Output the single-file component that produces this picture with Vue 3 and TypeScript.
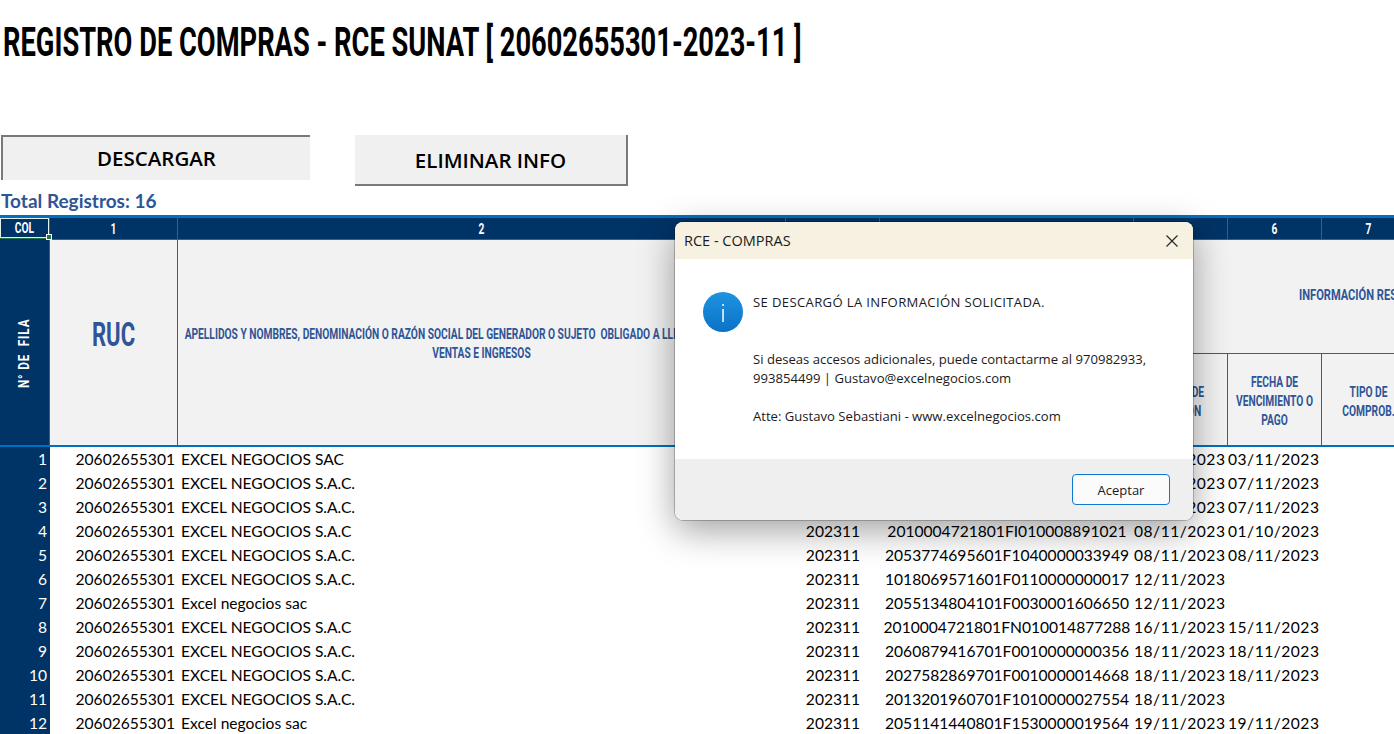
<script setup lang="ts">
const rows: [string, string, string, string, string, string][] = [
  ['20602655301', 'EXCEL NEGOCIOS SAC', '202311', '2010004721801F0010008880157', '02/11/2023', '03/11/2023'],
  ['20602655301', 'EXCEL NEGOCIOS S.A.C.', '202311', '2053774695601F1040000033801', '07/11/2023', '07/11/2023'],
  ['20602655301', 'EXCEL NEGOCIOS S.A.C.', '202311', '2053774695601F1040000033802', '07/11/2023', '07/11/2023'],
  ['20602655301', 'EXCEL NEGOCIOS S.A.C', '202311', '2010004721801FI010008891021', '08/11/2023', '01/10/2023'],
  ['20602655301', 'EXCEL NEGOCIOS S.A.C.', '202311', '2053774695601F1040000033949', '08/11/2023', '08/11/2023'],
  ['20602655301', 'EXCEL NEGOCIOS S.A.C.', '202311', '1018069571601F0110000000017', '12/11/2023', ''],
  ['20602655301', 'Excel negocios sac', '202311', '2055134804101F0030001606650', '12/11/2023', ''],
  ['20602655301', 'EXCEL NEGOCIOS S.A.C', '202311', '2010004721801FN010014877288', '16/11/2023', '15/11/2023'],
  ['20602655301', 'EXCEL NEGOCIOS S.A.C.', '202311', '2060879416701F0010000000356', '18/11/2023', '18/11/2023'],
  ['20602655301', 'EXCEL NEGOCIOS S.A.C.', '202311', '2027582869701F0010000014668', '18/11/2023', '18/11/2023'],
  ['20602655301', 'EXCEL NEGOCIOS S.A.C.', '202311', '2013201960701F1010000027554', '18/11/2023', ''],
  ['20602655301', 'Excel negocios sac', '202311', '2051141440801F1530000019564', '19/11/2023', '19/11/2023'],
]
</script>

<template>
  <div class="page">
    <h1 class="title"><span>REGISTRO DE COMPRAS - RCE SUNAT [ 20602655301-2023-11 ]</span></h1>
    <div class="actions">
      <button class="btn btn-down">DESCARGAR</button>
      <button class="btn btn-del">ELIMINAR INFO</button>
    </div>
    <div class="total">Total Registros: 16</div>
    <div class="sheet">
      <table>
        <colgroup>
          <col class="c0" /><col class="c1" /><col class="c2" /><col class="c3" /><col class="c4" />
          <col class="c5" /><col class="c5" /><col class="c5" /><col class="c5" />
        </colgroup>
        <thead>
          <tr class="nums">
            <th class="col-sel"><span class="cx">COL</span><span class="handle"></span></th>
            <th v-for="n in 8" :key="n"><span class="cx">{{ n }}</span></th>
          </tr>
          <tr class="h1">
            <th rowspan="2" class="side"><span>N° DE&nbsp; FILA</span></th>
            <th rowspan="2" class="ruc"><span class="cx">RUC</span></th>
            <th rowspan="2" class="name"><span class="cx">APELLIDOS Y NOMBRES, DENOMINACIÓN O RAZÓN SOCIAL DEL GENERADOR O SUJETO&nbsp; OBLIGADO A LLEVAR EL REGISTRO DE<br />VENTAS E INGRESOS</span></th>
            <th rowspan="2" class="sub"><span class="cx">PERIODO</span></th>
            <th rowspan="2" class="sub"><span class="cx">CAR SUNAT</span></th>
            <th colspan="4" class="group"><span class="gx">INFORMACIÓN RESPECTO AL COMPROBANTE</span></th>
          </tr>
          <tr class="h2">
            <th class="sub"><span class="cx">FECHA DE<br />EMISIÓN</span></th>
            <th class="sub"><span class="cx">FECHA DE<br />VENCIMIENTO O<br />PAGO</span></th>
            <th class="sub"><span class="cx">TIPO DE<br />COMPROB.</span></th>
            <th class="sub"><span class="cx">SERIE</span></th>
          </tr>
        </thead>
        <tbody>
          <tr v-for="(r, i) in rows" :key="i">
            <td class="idx">{{ i + 1 }}</td>
            <td class="r">{{ r[0] }}</td>
            <td class="l">{{ r[1] }}</td>
            <td class="m">{{ r[2] }}</td>
            <td class="m">{{ r[3] }}</td>
            <td class="m d1">{{ r[4] }}</td>
            <td class="m d2">{{ r[5] }}</td>
            <td></td><td></td>
          </tr>
        </tbody>
      </table>
    </div>

    <div class="dialog">
      <div class="dlg-head">
        <span>RCE - COMPRAS</span>
        <svg class="close" width="12" height="12" viewBox="0 0 12 12"><path d="M.5.5l11 11M11.500.5l-11 11" stroke="#222" stroke-width="1.100" fill="none" /></svg>
      </div>
      <div class="dlg-body">
        <svg class="info" width="40" height="40" viewBox="0 0 40 40">
          <defs>
            <linearGradient id="ig" x1="0" y1="0" x2="0" y2="1">
              <stop offset="0" stop-color="#1f93e2" />
              <stop offset="1" stop-color="#0b72c6" />
            </linearGradient>
          </defs>
          <circle cx="20" cy="20" r="20" fill="url(#ig)" />
          <rect x="19.300" y="12" width="1.500" height="2" fill="#fff" />
          <rect x="19.300" y="17" width="1.500" height="13" fill="#fff" />
        </svg>
        <div class="msg">
          <p class="m1">SE DESCARGÓ LA INFORMACIÓN SOLICITADA.</p>
          <p class="m2">Si deseas accesos adicionales, puede contactarme al 970982933, 993854499 | Gustavo@excelnegocios.com</p>
          <p class="m3">Atte: Gustavo Sebastiani - www.excelnegocios.com</p>
        </div>
      </div>
      <div class="dlg-foot">
        <button class="ok">Aceptar</button>
      </div>
    </div>
  </div>
</template>

<style>
html, body { margin: 0; overflow: hidden; background: #fff; }
</style>

<style scoped>
.page {
  position: relative;
  width: 1394px;
  height: 734px;
  overflow: hidden;
  background: #fff;
  font-family: Lato, "Liberation Sans", sans-serif;
  color: #000;
}
.title {
  margin: 0;
  height: 135px;
  box-sizing: border-box;
  padding: 20px 0 0 3px;
  font-family: Roboto, "Liberation Sans", sans-serif;
  font-weight: 700;
  font-size: 40px;
  line-height: 46px;
  color: #000;
  white-space: nowrap;
}
.title span {
  display: inline-block;
  transform: scaleX(.682);
  transform-origin: left center;
}
.actions {
  display: flex;
  align-items: flex-start;
  gap: 45px;
  padding-left: 1px;
  height: 55px;
}
.btn {
  font-family: "Open Sans", sans-serif;
  font-weight: 600;
  font-size: 20.500px;
  color: #000;
  background: #f0f0f0;
  padding: 0;
  border: 0;
}
.btn-down {
  width: 309px;
  height: 45px;
  padding-bottom: 2px;
  border-top: 2px solid #7a7878;
  border-left: 2px solid #7a7878;
}
.btn-del {
  width: 273px;
  height: 51px;
  border-right: 2px solid #7a7878;
  border-bottom: 2px solid #7a7878;
}
.total {
  height: 25px;
  padding-left: 1px;
  font-weight: 700;
  font-size: 19px;
  line-height: 22px;
  color: #2f5597;
}
.sheet {
  border-top: 3px solid #0070c0;
  width: 1394px;
  overflow: hidden;
}
table {
  border-collapse: separate;
  border-spacing: 0;
  table-layout: fixed;
  width: 1510px;
}
.c0 { width: 50px; }
.c1 { width: 128px; }
.c2 { width: 608px; }
.c3 { width: 94px; }
.c4 { width: 254px; }
.c5 { width: 94px; }
th {
  font-family: Roboto, "Liberation Sans", sans-serif;
  font-weight: 700;
  padding: 0;
  white-space: nowrap;
}
.cx {
  display: block;
  width: 300%;
  margin-left: -100%;
  transform: scaleX(.73);
}
.nums th {
  position: relative;
  background: #003366;
  color: #fff;
  height: 21px;
  font-size: 14px;
  border-right: 1px solid #0070c0;
}
.nums .col-sel { box-shadow: inset 0 0 0 1px #e8efe8; border-right: 1px solid #217346; border-bottom: 1px solid #217346; box-sizing: border-box; }
.handle {
  position: absolute;
  right: -3px;
  bottom: -2px;
  width: 4px;
  height: 4px;
  background: #217346;
  border: 1px solid #fff;
  z-index: 2;
}
.h1 th, .h2 th {
  background: #f2f2f2;
  color: #2f5597;
  border-right: 1px solid #0070c0;
  border-top: 1px solid #0070c0;
  font-size: 14px;
  line-height: 19px;
}
.h1 th { height: 113px; }
.h2 th { height: 87px; padding-top: 4px; }
.h1 .side {
  background: #003366;
  color: #fff;
  border-bottom: 2px solid #0070c0;
  border-top: 0;
  padding-top: 28px;
  letter-spacing: 1px;
}
.side span {
  display: inline-block;
  writing-mode: vertical-rl;
  transform: rotate(180deg) scaleY(.84);
}
.h1 .ruc { font-size: 33px; padding-bottom: 16px; border-bottom: 2px solid #0070c0; }
.h1 .ruc .cx { transform: scaleX(.67); }
.h1 .name, .h1 .sub { border-bottom: 2px solid #0070c0; }
.h1 .name { padding-top: 2px; }
.h1 .group {
  height: 67px;
  border-right: 0;
  text-align: left;
  vertical-align: top;
  padding: 46px 0 0 165px;
  font-size: 15px;
  overflow: hidden;
}
.gx { display: inline-block; transform: scaleX(.74); transform-origin: left center; }
.h2 th { border-bottom: 2px solid #0070c0; }
td {
  height: 24px;
  padding: 0;
  font-size: 15.600px;
  line-height: 24px;
  white-space: nowrap;
  overflow: hidden;
}
.idx { background: #003366; color: #fff; text-align: right; padding-right: 3px; }
.r { text-align: right; padding-right: 3px; }
.l { padding-left: 3px; }
.m { text-align: center; }
.d1, .d2 { letter-spacing: .5px; }
.d1 { padding-right: 8px; }
.d2 { padding-right: 7px; }
.dialog {
  position: absolute;
  left: 675px;
  top: 222px;
  width: 518px;
  height: 298px;
  display: flex;
  flex-direction: column;
  border-radius: 8px;
  overflow: hidden;
  background: #fff;
  box-shadow: 0 0 0 1px rgba(0, 0, 0, .22), 0 10px 36px rgba(0, 0, 0, .38);
  font-family: "Open Sans", sans-serif;
  font-size: 13.100px;
  color: #1a1a1a;
}
.dlg-head {
  height: 37px;
  flex: none;
  display: flex;
  align-items: center;
  justify-content: space-between;
  padding: 0 15px 0 9px;
  background: #f7f1e1;
  font-size: 14.500px;
}
.dlg-body {
  flex: 1;
  display: flex;
  gap: 10px;
  padding: 33px 0 0 28px;
}
.info { flex: none; }
.msg { width: 410px; }
.msg p { margin: 0; line-height: 19px; }
.m1 { padding-top: 1px; letter-spacing: .35px; }
.m2 { margin-top: 38px !important; }
.m3 { margin-top: 19px !important; }
.dlg-foot {
  height: 61px;
  flex: none;
  display: flex;
  justify-content: flex-end;
  align-items: flex-start;
  padding: 15px 23px 0 0;
  box-sizing: border-box;
  background: #efefef;
}
.ok {
  width: 98px;
  height: 31px;
  border: 1px solid #0f78d4;
  border-radius: 4px;
  background: #fbfbfb;
  font-family: "Open Sans", sans-serif;
  font-size: 13px;
  color: #1a1a1a;
  padding: 0;
}
</style>
